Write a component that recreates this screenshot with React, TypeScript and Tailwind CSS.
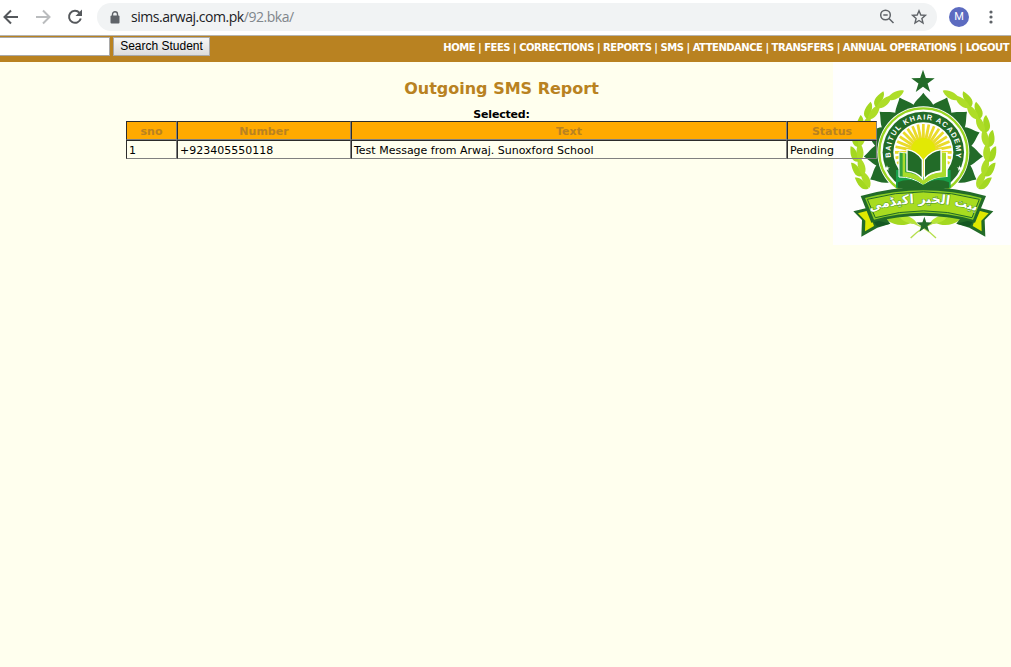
import React from "react";

const NAV = "HOME | FEES | CORRECTIONS | REPORTS | SMS | ATTENDANCE | TRANSFERS | ANNUAL OPERATIONS | LOGOUT";

const CX = 280;
const CY = 277;

function Star({ x, y, r, fill }: { x: number; y: number; r: number; fill: string }) {
  const pts = Array.from({ length: 10 }, (_, i) => {
    const a = (i * Math.PI) / 5 - Math.PI / 2;
    const q = i % 2 ? r * 0.39 : r;
    return `${x + q * Math.cos(a)},${y + q * Math.sin(a)}`;
  }).join(" ");
  return <polygon points={pts} fill={fill} />;
}

function Crest() {
  const petals = [-117, -94, -70.5, -47, -23.5, 0, 23.5, 47, 70.5, 94, 117];
  const leaves = [-116, -104, -91, -78, -65, -52, -39, -27];
  return (
    <svg viewBox="0 0 534 549" className="block h-[183px] w-[178px]">
      <rect width="534" height="549" fill="#fefefe" />
      <g transform="translate(-9 -6)">
        {[1, -1].map((s) => (
          <g key={s} transform={s === -1 ? "translate(560 0) scale(-1 1)" : undefined}>
            {leaves.map((a) => (
              <g key={a} transform={`rotate(${a} ${CX} ${CY}) translate(${CX} ${CY - 197})`}>
                {a !== -27 && <path d="M-25 3 C-27 -18 -6 -24 22 -21 C20 -8 0 2 -25 3Z" fill="#a4d820" />}
                <path d="M-25 5 C-10 -7 22 -6 32 6 C16 20 -12 23 -25 5Z" fill="#aedd28" />
              </g>
            ))}
            <path d="M170 479 C194 464 219 470 244 488 C222 499 194 498 170 479Z" fill="#a4d820" />
            <path d="M204 466 C229 461 252 474 263 493 C236 493 216 484 204 466Z" fill="#b8e630" />
            <path d="M236 485 Q278 495 318 534" fill="none" stroke="#b5df4c" strokeWidth="4" />
          </g>
        ))}
        {petals.map((a) => (
          <path
            key={a}
            transform={`rotate(${a} ${CX} ${CY})`}
            d="M246 160 C242 130 266 118 280 98 C294 118 318 130 314 160Z"
            fill="#226b28"
          />
        ))}
        <circle cx={CX} cy={CY} r="138" fill="#fff" />
        <circle cx={CX} cy={CY} r="132" fill="#fff" stroke="#9ad522" strokeWidth="7" />
        <circle cx={CX} cy={CY} r="122" fill="#226b28" />
        <circle cx={CX} cy={CY} r="90" fill="#fff" />
        {Array.from({ length: 32 }, (_, i) => (
          <path
            key={i}
            transform={`rotate(${i * 11.25} ${CX} ${CY})`}
            d="M275 272 L276 192 L284 192 L285 272Z"
            fill="#eadb2a"
          />
        ))}
        <circle cx={CX} cy="269" r="36" fill="#e2e805" />
        <path id="crestRing" d="M188.6 314 A98.5 98.5 0 1 1 371.4 314" fill="none" />
        <text fill="#fff" fontSize="22" className="font-['Liberation_Sans'] font-bold">
          <textPath href="#crestRing" startOffset="50%" textAnchor="middle" textLength="340" lengthAdjust="spacing">
            BAITUL KHAIR ACADEMY
          </textPath>
        </text>
        <Star x={171} y={325} r={9} fill="#fff" />
        <Star x={389} y={325} r={9} fill="#fff" />
        <path d="M198 330 Q250 323 280 350 Q310 323 362 330 V383 H198Z" fill="#18a04a" />
        <path d="M207 276 Q252 278 277 306 V373 Q247 350 207 351Z" fill="#35a33e" stroke="#fff" strokeWidth="3" />
        <path d="M353 276 Q308 278 283 306 V373 Q313 350 353 351Z" fill="#fff" />
        <path d="M218 278 H225 V337 Q260 339 280 360 Q300 339 335 337 V278 H348 V350 Q307 350 280 374 Q252 350 218 350Z" fill="#a9dc2c" />
        <path d="M231 269 Q262 274 277 299 V356 Q260 336 231 333Z" fill="#226b28" stroke="#fff" strokeWidth="4" />
        <path d="M333 269 Q300 274 283 299 V356 Q300 336 333 333Z" fill="#226b28" stroke="#fff" strokeWidth="4" />
        <path d="M203 367 Q245 350 280 376 Q315 350 357 367 V385 H203Z" fill="#226b28" />
        {[1, -1].map((s) => (
          <g key={s} transform={s === -1 ? "translate(560 0) scale(-1 1)" : undefined}>
            <path d="M113 443 L70 454 L96 480 L94 530 L142 503 L181 491 L150 449Z" fill="#226b28" />
            <path d="M112 452 L84 460 L106 482 L105 514 L132 498 L126 480Z" fill="#dfe900" />
            <path d="M126 478 L181 491 L142 500Z" fill="#155822" />
          </g>
        ))}
        <path d="M92 408 Q280 354 468 408 L435 488 Q280 446 124 488Z" fill="#226b28" />
        <path d="M105 414 Q280 367 455 414 L429 479 Q280 437 132 479Z" fill="#8bcf24" />
        <path d="M112 418 Q280 373 448 418 L426 473 Q280 432 136 473Z" fill="#a8dc20" stroke="#226b28" strokeWidth="3" />
        <path id="crestBanner" d="M100 460 Q280 398 460 460" fill="none" />
        <text
          direction="rtl"
          fill="#fff"
          stroke="#4f9a26"
          strokeWidth="3"
          paintOrder="stroke"
          fontSize="38"
          className="font-['DejaVu_Sans'] font-bold"
        >
          <textPath href="#crestBanner" startOffset="50%" textAnchor="middle">
            بيت الخير اكيڈمى
          </textPath>
        </text>
        <Star x={279} y={66} r={37} fill="#226b28" />
        <Star x={283} y={495} r={25} fill="#226b28" />
      </g>
    </svg>
  );
}

function BrowserBar() {
  return (
    <div className="flex h-[35px] w-full items-start bg-white text-[#5f6368]">
      <svg viewBox="0 0 97 35" className="h-[35px] w-[97px] shrink-0" fill="none" strokeWidth="2">
        <path d="M18 17H5M11 10.5L4.5 17L11 23.5" stroke="#55585c" />
        <path d="M36 17H49M43 10.5L49.5 17L43 23.5" stroke="#babcbe" />
        <path d="M79.5 12.8A6 6 0 1 0 80.8 18.5" stroke="#55585c" />
        <path d="M82 9.5V16H75.5Z" fill="#55585c" />
      </svg>
      <div className="mt-[3px] flex h-7 w-[840px] shrink-0 items-center rounded-full bg-[#f1f3f4]">
        <svg viewBox="0 0 10 13" className="ml-[13px] h-[13px] w-[10px]">
          <rect x="0.5" y="4.5" width="9" height="8" rx="1" fill="#5f6368" />
          <path d="M2.5 5V3.3a2.5 2.5 0 0 1 5 0V5" fill="none" stroke="#5f6368" strokeWidth="1.4" />
        </svg>
        <span className="ml-[11px] whitespace-nowrap font-['Open_Sans',sans-serif] text-[14px] leading-7 tracking-[-0.46px] text-[#202124]">
          sims.arwaj.com.pk<span className="text-[#80868b]">/92.bka/</span>
        </span>
        <svg viewBox="0 0 50 20" className="ml-auto mr-[7px] h-5 w-[50px]" fill="none" stroke="#5f6368" strokeWidth="1.5">
          <circle cx="5.5" cy="8" r="4.8" />
          <path d="M9 11.5L13.5 16M3.3 8H7.7" />
          <path d="M39 3.8L40.8 8L45.4 8.4L41.9 11.4L43 16L39 13.5L35 16L36.1 11.4L32.6 8.4L37.2 8Z" strokeWidth="1.4" />
        </svg>
      </div>
      <div className="ml-3 mt-[7px] flex size-5 items-center justify-center rounded-full bg-[#5c6bc0] font-['Roboto',sans-serif] text-[11px] text-white">
        M
      </div>
      <svg viewBox="0 0 4 16" className="ml-[20px] mt-[9px] h-4 w-1" fill="#5f6368">
        <circle cx="2" cy="3" r="1.6" />
        <circle cx="2" cy="8" r="1.6" />
        <circle cx="2" cy="13" r="1.6" />
      </svg>
    </div>
  );
}

const cell = "h-[19px] border border-t-[#2c2c2c] border-l-[#2c2c2c] border-r-[#808080] border-b-[#808080]";

export default function App() {
  return (
    <div className="h-[667px] w-[1011px] overflow-hidden bg-[#ffffee] font-['DejaVu_Sans',Verdana,sans-serif] text-[11px] text-black">
      <BrowserBar />
      <div className="flex h-[27px] items-start border-t border-[#b6b4b0] bg-[#b98221]">
        <input className="mt-px h-[19px] w-[110px] border border-l-0 border-[#a9a9a9] bg-white outline-none" aria-label="Student" />
        <button className="ml-[3px] mt-px h-[19px] w-[97px] whitespace-nowrap border border-[#a9a9a9] bg-linear-to-b from-[#f6f6f6] to-[#dddddd] font-['Liberation_Sans',sans-serif] text-[12px] leading-[17px]">
          Search Student
        </button>
        <div className="ml-auto mr-[2px] mt-[4px] whitespace-nowrap text-[10px] leading-[15px] font-bold tracking-[-0.48px] text-white">
          {NAV}
        </div>
      </div>
      <div className="relative h-[605px]">
        <div className="absolute top-0 right-0">
          <Crest />
        </div>
        <div className="relative ml-[126px] w-[751px] pt-[16px]">
          <h1 className="text-center text-[16px] leading-[22px] font-bold text-[#b98221]">Outgoing SMS Report</h1>
          <div className="mt-[8px] h-[13px] text-center leading-[14px] font-bold tracking-[-0.2px]">Selected:</div>
          <table className="w-[751px] table-fixed border-separate border-spacing-0 leading-[13px]">
            <colgroup>
              <col className="w-[51px]" />
              <col className="w-[174px]" />
              <col className="w-[436px]" />
              <col className="w-[90px]" />
            </colgroup>
            <thead>
              <tr className="bg-[#ffaa00] text-[#b98221]">
                {["sno", "Number", "Text", "Status"].map((h) => (
                  <th key={h} className={`${cell} px-0 pt-[2px] pb-0 text-center font-bold`}>{h}</th>
                ))}
              </tr>
            </thead>
            <tbody>
              <tr>
                {["1", "+923405550118", "Test Message from Arwaj. Sunoxford School", "Pending"].map((t) => (
                  <td key={t} className={`${cell} whitespace-nowrap px-[2px] pt-[2px] pb-0`}>{t}</td>
                ))}
              </tr>
            </tbody>
          </table>
        </div>
      </div>
    </div>
  );
}
